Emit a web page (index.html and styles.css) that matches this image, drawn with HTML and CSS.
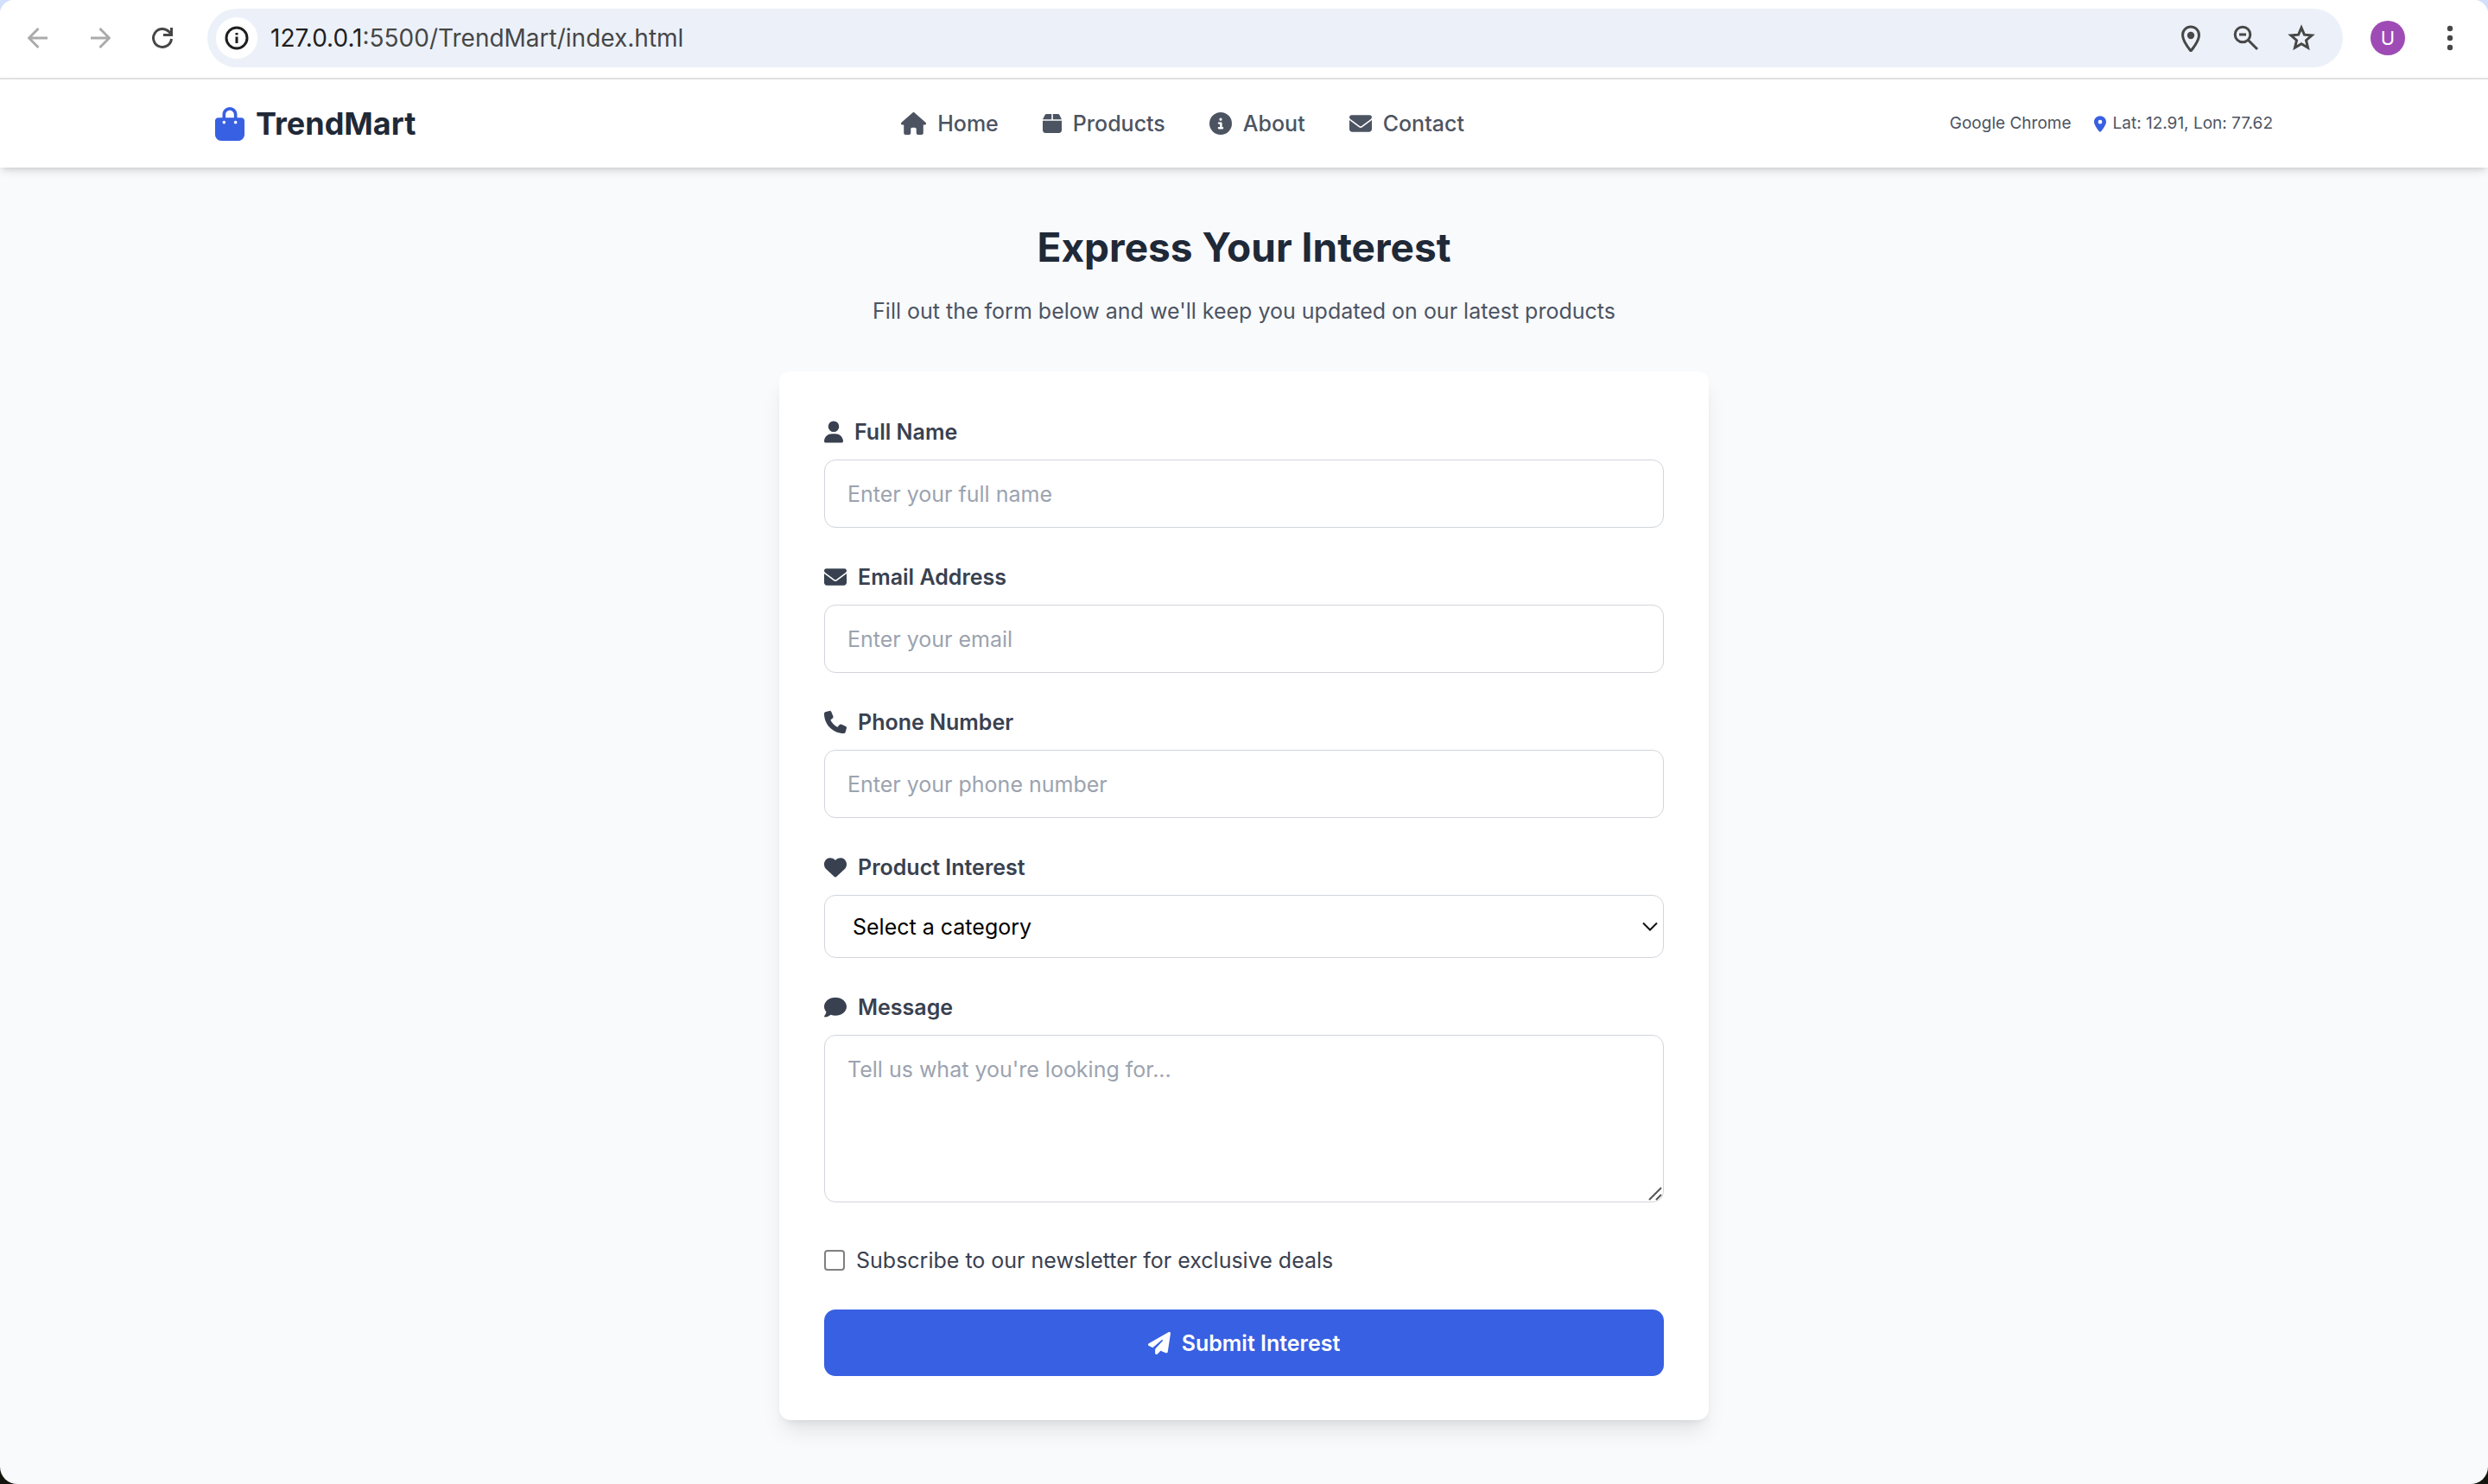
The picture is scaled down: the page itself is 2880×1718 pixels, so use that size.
FILE: index.html
```html
<!DOCTYPE html>
<html lang="en">
<head>
<meta charset="utf-8">
<meta name="viewport" content="width=device-width, initial-scale=1">
<title>TrendMart</title>
<link rel="stylesheet" href="styles.css">
</head>
<body>
<div class="window">
  <div class="toolbar">
    <button class="tool tool-dim" type="button" aria-label="Back"><svg width="24" height="24" viewBox="0 0 24 24"><path d="M23 12H2M12.500 1 1.500 12l11 11"/></svg></button>
    <button class="tool tool-dim" type="button" aria-label="Forward"><svg width="24" height="24" viewBox="0 0 24 24"><path d="M1 12h21M11.500 1l11 11-11 11"/></svg></button>
    <button class="tool" type="button" aria-label="Reload"><svg width="26" height="26" viewBox="0 0 26 26"><path d="M23.500 14A10.500 10.500 0 1 1 20.500 5.600L23.500 9"/><path d="M23.500 1v8.500H14"/></svg></button>
    <div class="omnibox">
      <button class="site-info" type="button" aria-label="Site information"><svg width="28" height="28" viewBox="0 0 28 28"><circle cx="14" cy="14" r="12"/><path d="M14 12.500V20M14 8v2.600"/></svg></button>
      <div class="url"><span class="host">127.0.0.1</span>:5500/TrendMart/index.html</div>
      <div class="omni-tools">
        <button class="omni-tool" type="button" aria-label="Location"><svg width="32" height="32" viewBox="0 0 32 32"><path d="M16 31C9.500 23 6.500 18 6.500 12.500a9.500 9.500 0 0 1 19 0C25.500 18 22.500 23 16 31z"/><circle cx="16" cy="13" r="4.200" class="solid"/></svg></button>
        <button class="omni-tool" type="button" aria-label="Zoom"><svg width="32" height="32" viewBox="0 0 32 32"><circle cx="12" cy="12" r="8.800"/><path d="M18.500 18.500 29 29M8 12h8"/></svg></button>
        <button class="omni-tool" type="button" aria-label="Bookmark"><svg width="32" height="32" viewBox="0 0 32 32"><path d="M16 4.200l3.400 8 8.700.8-6.600 5.700 2 8.500-7.500-4.500-7.500 4.500 2-8.500L3.900 13l8.700-.8z"/></svg></button>
      </div>
    </div>
    <button class="avatar" type="button">U</button>
    <button class="tool menu" type="button" aria-label="Menu"><svg width="8" height="30" viewBox="0 0 8 30"><g class="solid"><circle cx="4" cy="4" r="3.200"/><circle cx="4" cy="15" r="3.200"/><circle cx="4" cy="26" r="3.200"/></g></svg></button>
  </div>

  <header class="header">
    <div class="header-inner">
      <a class="logo" href="#"><svg class="logo-icon" viewBox="0 0 448 512"><path d="M160 112c0-35.300 28.700-64 64-64s64 28.700 64 64v48H160V112zm-48 48H48c-26.500 0-48 21.500-48 48V416c0 53 43 96 96 96H352c53 0 96-43 96-96V208c0-26.500-21.500-48-48-48H336V112C336 50.100 285.900 0 224 0S112 50.100 112 112v48zm24 48a24 24 0 1 1 0 48 24 24 0 1 1 0-48zm152 24a24 24 0 1 1 48 0 24 24 0 1 1 -48 0z"/></svg>TrendMart</a>
      <nav class="nav">
        <a href="#"><svg class="icon icon-home" viewBox="0 0 576 512"><path d="M575.8 255.5c0 18-15 32.1-32 32.1h-32l.7 160.2c0 2.7-.2 5.4-.5 8.1V472c0 22.1-17.9 40-40 40H456c-1.1 0-2.2 0-3.300-.1c-1.4 .1-2.8 .1-4.200 .1H416 392c-22.1 0-40-17.9-40-40V448 384c0-17.7-14.3-32-32-32H256c-17.7 0-32 14.3-32 32v64 24c0 22.1-17.9 40-40 40H160 128.1c-1.5 0-3-.1-4.5-.2c-1.2 .1-2.4 .2-3.6 .2H104c-22.1 0-40-17.9-40-40V360c0-.9 0-1.9 .1-2.8V287.6H32c-18 0-32-14-32-32.1c0-9 3-17 10-24L266.4 8c7-7 15-8 22-8s15 2 21 7L564.8 231.5c8 7 12 15 11 24z"/></svg>Home</a>
        <a href="#"><svg class="icon icon-slim" viewBox="0 0 448 512"><path d="M50.7 58.5L0 160H208V32H93.7C75.5 32 58.9 42.3 50.7 58.5zM240 160H448L397.3 58.5C389.1 42.3 372.5 32 354.3 32H240V160zm208 32H0V416c0 35.3 28.7 64 64 64H384c35.3 0 64-28.7 64-64V192z"/></svg>Products</a>
        <a href="#"><svg class="icon" viewBox="0 0 512 512"><path d="M256 512A256 256 0 1 0 256 0a256 256 0 1 0 0 512zM216 336h24V272H216c-13.3 0-24-10.7-24-24s10.7-24 24-24h48c13.3 0 24 10.7 24 24v88h8c13.3 0 24 10.7 24 24s-10.7 24-24 24H216c-13.3 0-24-10.7-24-24s10.7-24 24-24zm40-208a32 32 0 1 1 0 64 32 32 0 1 1 0-64z"/></svg>About</a>
        <a href="#"><svg class="icon" viewBox="0 0 512 512"><path d="M48 64C21.5 64 0 85.5 0 112c0 15.1 7.1 29.3 19.2 38.4L236.8 313.6c11.4 8.5 27 8.5 38.4 0L492.8 150.4c12.1-9.1 19.2-23.3 19.2-38.4c0-26.5-21.5-48-48-48H48zM0 176V384c0 35.3 28.7 64 64 64H448c35.3 0 64-28.7 64-64V176L294.4 339.2c-22.8 17.1-54 17.1-76.8 0L0 176z"/></svg>Contact</a>
      </nav>
      <div class="client">
        <span>Google Chrome</span>
        <span class="place"><svg class="place-icon" viewBox="0 0 384 512"><path d="M215.7 499.2C267 435 384 279.4 384 192C384 86 298 0 192 0S0 86 0 192c0 87.4 117 243 168.3 307.2c12.3 15.3 35.1 15.3 47.4 0zM192 128a64 64 0 1 1 0 128 64 64 0 1 1 0-128z"/></svg>Lat: 12.91, Lon: 77.62</span>
      </div>
    </div>
  </header>

  <main class="main">
    <h1 class="title">Express Your Interest</h1>
    <p class="subtitle">Fill out the form below and we'll keep you updated on our latest products</p>
    <form class="card">
      <div class="field">
        <label for="name"><svg class="icon icon-slim" viewBox="0 0 448 512"><path d="M224 256A128 128 0 1 0 224 0a128 128 0 1 0 0 256zm-45.7 48C79.8 304 0 383.8 0 482.3C0 498.7 13.3 512 29.7 512H418.3c16.4 0 29.7-13.3 29.7-29.7C448 383.8 368.2 304 269.7 304H178.3z"/></svg>Full Name</label>
        <input class="control" id="name" type="text" placeholder="Enter your full name">
      </div>
      <div class="field">
        <label for="email"><svg class="icon" viewBox="0 0 512 512"><path d="M48 64C21.5 64 0 85.5 0 112c0 15.1 7.1 29.3 19.2 38.4L236.8 313.6c11.4 8.5 27 8.5 38.4 0L492.8 150.4c12.1-9.1 19.2-23.3 19.2-38.4c0-26.5-21.5-48-48-48H48zM0 176V384c0 35.3 28.7 64 64 64H448c35.3 0 64-28.7 64-64V176L294.4 339.2c-22.8 17.1-54 17.1-76.8 0L0 176z"/></svg>Email Address</label>
        <input class="control" id="email" type="email" placeholder="Enter your email">
      </div>
      <div class="field">
        <label for="phone"><svg class="icon" viewBox="0 0 512 512"><path d="M164.9 24.6c-7.7-18.6-28-28.5-47.4-23.2l-88 24C12.1 30.2 0 46 0 64C0 311.4 200.6 512 448 512c18 0 33.8-12.1 38.6-29.5l24-88c5.3-19.4-4.6-39.7-23.2-47.4l-96-40c-16.3-6.8-35.2-2.1-46.3 11.6L304.7 368C234.3 334.7 177.3 277.7 144 207.3L193.3 167c13.7-11.2 18.4-30 11.6-46.3l-40-96z"/></svg>Phone Number</label>
        <input class="control" id="phone" type="tel" placeholder="Enter your phone number">
      </div>
      <div class="field">
        <label for="interest"><svg class="icon" viewBox="0 0 512 512"><path d="M47.6 300.4L228.3 469.1c7.5 7 17.4 10.9 27.7 10.9s20.2-3.9 27.7-10.9L464.4 300.4c30.4-28.3 47.6-68 47.6-109.5v-5.8c0-69.9-50.5-129.5-119.4-141C347 36.5 300.6 51.4 268 84L256 96 244 84c-32.6-32.6-79-47.5-124.6-39.9C50.5 55.6 0 115.2 0 185.1v5.8c0 41.5 17.2 81.2 47.6 109.5z"/></svg>Product Interest</label>
        <div class="select-wrap">
          <select class="control select" id="interest"><option>Select a category</option></select>
          <svg class="chevron" width="18" height="11" viewBox="0 0 18 11"><path d="M1 1.500l8 8 8-8"/></svg>
        </div>
      </div>
      <div class="field">
        <label for="message"><svg class="icon" viewBox="0 0 512 512"><path d="M512 240c0 114.9-114.6 208-256 208c-37.1 0-72.3-6.4-104.1-17.9c-11.9 8.7-31.3 20.6-54.3 30.6C73.6 471.1 44.7 480 16 480c-6.5 0-12.3-3.9-14.8-9.9c-2.5-6-1.1-12.8 3.4-17.4l.3-.3c.3-.3 .7-.7 1.3-1.4c1.1-1.2 2.8-3.1 4.9-5.7c4.1-5 9.6-12.4 15.2-21.6c10-16.6 19.5-38.4 21.4-62.9C17.7 326.8 0 285.1 0 240C0 125.1 114.6 32 256 32s256 93.1 256 208z"/></svg>Message</label>
        <div class="area-wrap">
          <textarea class="control area" id="message" rows="4" placeholder="Tell us what you're looking for..."></textarea>
          <svg class="grip" width="16" height="16" viewBox="0 0 16 16"><path d="M1 15 15 1M9 15l6-6"/></svg>
        </div>
      </div>
      <label class="check"><input type="checkbox">Subscribe to our newsletter for exclusive deals</label>
      <button class="submit" type="submit"><svg class="icon" viewBox="0 0 512 512"><path d="M498.1 5.6c10.1 7 15.4 19.1 13.5 31.2l-64 416c-1.5 9.7-7.4 18.2-16 23s-18.9 5.4-28 1.6L284 427.7l-68.5 74.1c-8.9 9.7-22.9 12.9-35.2 8.1S160 493.2 160 480V396.4c0-4 1.5-7.8 4.2-10.7L331.8 202.8c5.8-6.3 5.6-16-.4-22s-15.7-6.4-22-.7L106 360.8 17.7 316.6C7.1 311.3 .3 300.7 0 288.9s5.9-22.8 16.1-28.7l448-256c10.7-6.1 23.9-5.5 34 1.4z"/></svg>Submit Interest</button>
    </form>
  </main>
</div>
</body>
</html>
```

FILE: styles.css
```css
*, *::before, *::after { box-sizing: border-box; }

body {
  margin: 0;
  background: linear-gradient(#d3e0fc 50%, #14150f 50%);
  font-family: Inter, "Liberation Sans", sans-serif;
  font-size: 25px;
  line-height: 38px;
  color: #4c5462;
}

button, input, select, textarea { font: inherit; }
button { border: 0; padding: 0; background: none; cursor: pointer; }
a { color: inherit; text-decoration: none; }

.window {
  display: flex;
  flex-direction: column;
  min-height: 100vh;
  overflow: hidden;
  border-radius: 16px 16px 20px 20px;
  background: #f9fafc;
}

/* Browser toolbar */
.toolbar {
  display: flex;
  align-items: center;
  padding: 10px 8px 12px;
  border-bottom: 2px solid #e1e1e1;
  background: #fff;
}
.toolbar svg { display: block; fill: none; stroke: #474747; stroke-width: 3; }
.toolbar .solid { fill: #474747; stroke: none; }
.tool { display: grid; place-items: center; width: 72px; height: 68px; }
.toolbar .tool-dim svg { stroke: #ababab; }
.omnibox {
  display: flex;
  flex: 1;
  align-items: center;
  height: 68px;
  margin-left: 16px;
  padding: 0 16px 0 10px;
  border-radius: 34px;
  background: #ecf1f9;
}
.site-info {
  display: grid;
  place-items: center;
  width: 48px;
  height: 48px;
  border-radius: 50%;
  background: #fff;
}
.site-info svg { stroke: #1f1f1f; }
.url { flex: 1; margin-left: 15px; font-size: 28px; color: #474747; }
.host { color: #1f1f1f; }
.omni-tools { display: flex; }
.omni-tool { display: grid; place-items: center; width: 64px; height: 64px; }
.avatar {
  width: 40px;
  height: 40px;
  margin: 0 16px 0 32px;
  border-radius: 50%;
  background: #9e4bb5;
  color: #fff;
  font-size: 22px;
}

/* Site header */
.header {
  z-index: 1;
  background: #fff;
  box-shadow: 0 6px 10px -2px rgba(0, 0, 0, .12), 0 3px 6px -3px rgba(0, 0, 0, .12);
}
.header-inner {
  display: flex;
  align-items: center;
  justify-content: space-between;
  max-width: 2458px;
  height: 102px;
  margin: 0 auto;
  padding: 0 38px;
}
.logo { display: flex; align-items: center; gap: 13px; font-size: 36px; font-weight: 700; color: #1f2937; }
.logo-icon { width: 34px; height: 39px; fill: #3860e2; }
.nav { display: flex; gap: 51px; font-weight: 500; }
.nav a { display: flex; align-items: center; gap: 13px; }
.icon { flex: none; width: 26px; height: 26px; fill: currentColor; }
.icon-home { width: 29px; }
.icon-slim { width: 22px; }
.client { display: flex; gap: 26px; font-size: 19px; }
.place { display: flex; align-items: center; gap: 8px; }
.place-icon { width: 14px; height: 19px; fill: #3860e2; }

/* Interest form */
.main { width: 100%; max-width: 1178px; margin: 0 auto; padding: 63px 51px; }
.title { margin: 0 0 26px; font-size: 46px; line-height: 58px; text-align: center; color: #1f2937; }
.subtitle { margin: 0 0 51px; text-align: center; }
.card {
  padding: 51px 52px;
  border-radius: 13px;
  background: #fff;
  box-shadow: 0 16px 24px -5px rgba(0, 0, 0, .1), 0 6px 10px -6px rgba(0, 0, 0, .1);
}
.field { margin-bottom: 38px; }
.field label {
  display: flex;
  align-items: center;
  gap: 13px;
  margin-bottom: 13px;
  font-weight: 600;
  color: #394150;
}
.control {
  display: block;
  width: 100%;
  height: 79px;
  margin: 0;
  padding: 20px 26px;
  border: 1px solid #d1d5db;
  border-radius: 13px;
  background: #fff;
  color: #000;
}
.control::placeholder { color: #9ca3af; opacity: 1; }
.select-wrap, .area-wrap { position: relative; }
.select { height: 73px; padding: 0 32px; appearance: none; }
.chevron { position: absolute; right: 7px; top: 31px; fill: none; stroke: #111; stroke-width: 2; }
.area { height: 194px; resize: none; }
.grip { position: absolute; right: 2px; bottom: 2px; fill: none; stroke: #555; stroke-width: 2; }
.check { display: flex; align-items: center; gap: 13px; margin: 48px 0 38px; color: #394150; }
.check input {
  width: 24px;
  height: 24px;
  margin: 0;
  appearance: none;
  border: 2px solid #808080;
  border-radius: 4px;
  background: #fff;
}
.check input:checked { background: #3860e2; }
.submit {
  display: flex;
  align-items: center;
  justify-content: center;
  gap: 13px;
  width: 100%;
  height: 77px;
  border-radius: 13px;
  background: #3860e2;
  color: #fff;
  font-weight: 600;
}
```
